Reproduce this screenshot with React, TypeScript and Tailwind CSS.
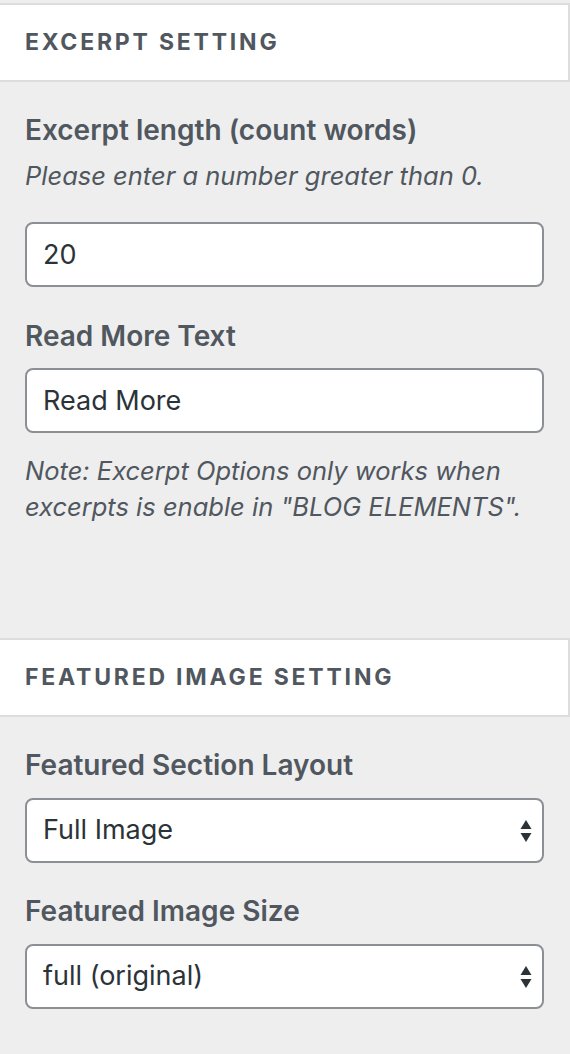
import React from "react";

const font = { fontFamily: "Inter, 'Noto Sans', sans-serif" };

function SectionTitle({ children }: { children: React.ReactNode }) {
  return (
    <div className="flex h-[79px] items-center border-y-2 border-r-2 border-[#dddddd] bg-white pl-[25px]">
      <h3 className="text-[23px] font-bold uppercase tracking-[2.8px] text-[#50575e]">{children}</h3>
    </div>
  );
}

function Label({ children, className = "" }: { children: React.ReactNode; className?: string }) {
  return <div className={`text-[28px] font-semibold leading-[36px] text-[#50575e] ${className}`}>{children}</div>;
}

function TextBox({ value, className = "" }: { value: string; className?: string }) {
  return (
    <input
      readOnly
      value={value}
      className={`block h-[65px] w-[519px] rounded-[8px] border-2 border-[#8c8f94] bg-white px-[16px] text-[27px] text-[#2c3338] outline-none ${className}`}
    />
  );
}

function SelectBox({ value, className = "" }: { value: string; className?: string }) {
  return (
    <div
      className={`flex h-[65px] w-[519px] items-center justify-between rounded-[8px] border-2 border-[#8c8f94] bg-white pl-[16px] pr-[10px] text-[27px] text-[#2c3338] ${className}`}
    >
      <span>{value}</span>
      <svg width="12" height="24" viewBox="0 0 12 24" fill="#2c3338">
        <path d="M6 1 L11.5 10 L0.5 10 Z" />
        <path d="M0.5 14 L11.5 14 L6 23 Z" />
      </svg>
    </div>
  );
}

export default function App() {
  return (
    <div className="min-h-[1054px] w-[570px] bg-[#eeeeee] pt-[3px]" style={font}>
      <SectionTitle>Excerpt Setting</SectionTitle>
      <div className="h-[556px] px-[25px] pt-[30px]">
        <Label>Excerpt length (count words)</Label>
        <p className="mt-[10px] text-[25.5px] italic leading-[36px] text-[#50575e]">
          Please enter a number greater than 0.
        </p>
        <TextBox value="20" className="mt-[28px]" />
        <Label className="mt-[31px]">Read More Text</Label>
        <TextBox value="Read More" className="mt-[14px]" />
        <p className="mt-[20px] text-[25.5px] italic leading-[36px] text-[#50575e]">
          Note: Excerpt Options only works when excerpts is enable in "BLOG ELEMENTS".
        </p>
      </div>
      <SectionTitle>Featured Image Setting</SectionTitle>
      <div className="px-[25px] pt-[30px]">
        <Label>Featured Section Layout</Label>
        <SelectBox value="Full Image" className="mt-[15px]" />
        <Label className="mt-[30px]">Featured Image Size</Label>
        <SelectBox value="full (original)" className="mt-[15px]" />
      </div>
    </div>
  );
}
